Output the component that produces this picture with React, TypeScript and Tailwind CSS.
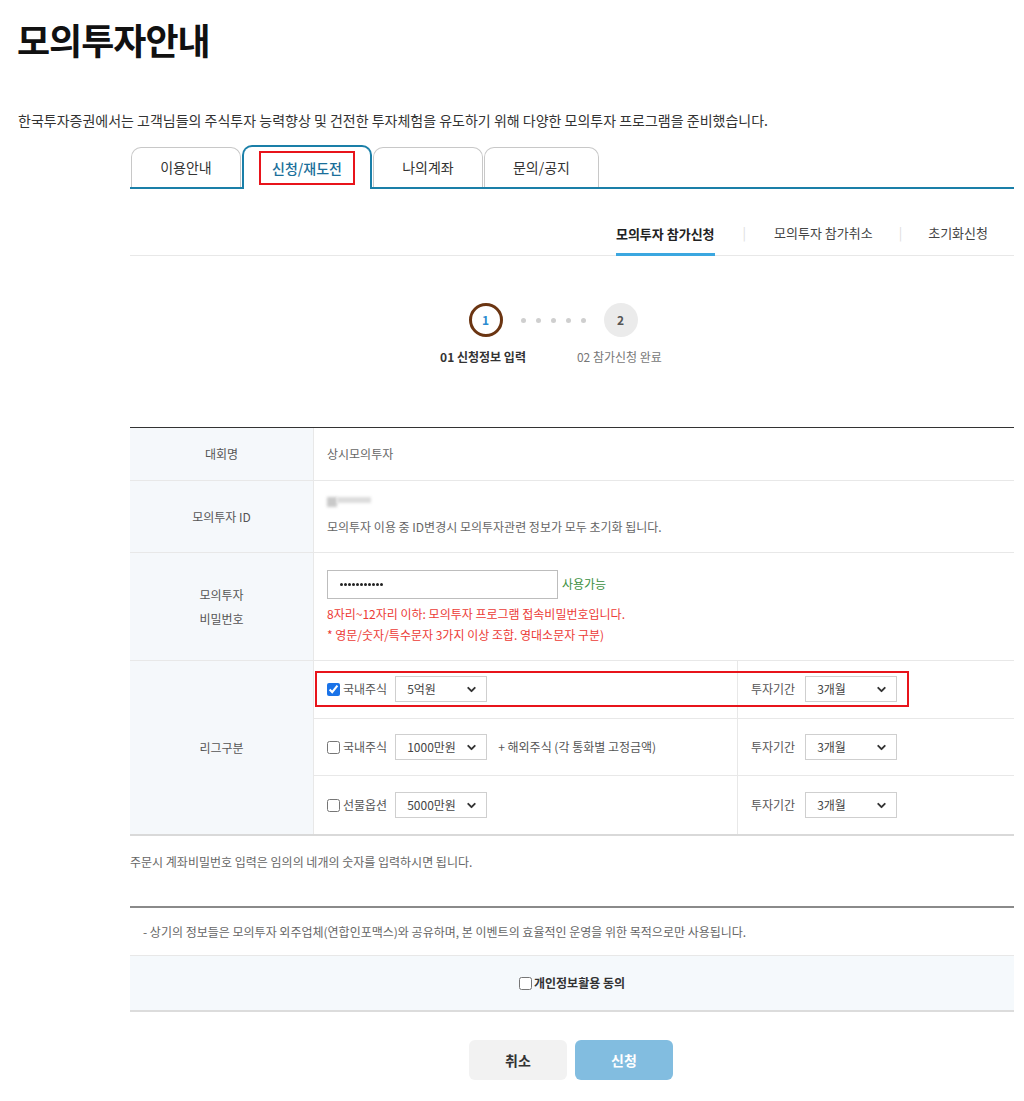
import { ReactNode } from "react";
import { ChevronDown } from "lucide-react";

function Select({ value, width }: { value: string; width: string }) {
  return (
    <div
      className={`${width} h-[26px] border border-[#cfcfcf] bg-white flex items-center justify-between pl-[11px] pr-[8px] text-[12px] text-[#444]`}
    >
      <span>{value}</span>
      <ChevronDown size={13} strokeWidth={3.5} className="text-[#333]" />
    </div>
  );
}

function Check({ checked, label }: { checked?: boolean; label: string }) {
  return (
    <label className="flex items-center gap-[3px] text-[12px] text-[#555]">
      <input
        type="checkbox"
        defaultChecked={checked}
        className="w-[13px] h-[13px] m-0 accent-[#1a73e8]"
      />
      <span>{label}</span>
    </label>
  );
}

function Row({ label, children, h }: { label: ReactNode; children: ReactNode; h: string }) {
  return (
    <div className={`flex ${h} border-b border-[#e8e8e8]`}>
      <div className="w-[184px] shrink-0 bg-[#f5f8fb] border-r border-[#e8e8e8] flex items-center justify-center text-center text-[12px] text-[#555] leading-[24px]">
        {label}
      </div>
      <div className="flex-1 flex flex-col justify-center pl-[13px]">{children}</div>
    </div>
  );
}

function LeagueRow({
  children,
  highlight,
  last,
}: {
  children: ReactNode;
  highlight?: boolean;
  last?: boolean;
}) {
  return (
    <div className={`relative flex h-[58px] ${last ? "" : "border-b border-[#e8e8e8]"}`}>
      <div className="w-[424px] shrink-0 flex items-center gap-[8px] pl-[13px] border-r border-[#e8e8e8]">
        {children}
      </div>
      <div className="flex-1 flex items-center gap-[10px] pl-[13px] text-[12px] text-[#555]">
        <span>투자기간</span>
        <Select value="3개월" width="w-[92px]" />
      </div>
      {highlight && (
        <div className="absolute left-[1px] top-[10px] w-[594px] h-[36px] border-2 border-[#e8141b] pointer-events-none" />
      )}
    </div>
  );
}

export default function App() {
  const dots = Array.from({ length: 11 });
  return (
    <div className="w-[1024px] min-h-[1101px] bg-white font-['Noto_Sans_CJK_KR','Noto_Sans',sans-serif] text-[#222]">
      {/* Title */}
      <h1 className="pl-[17px] pt-[17px] text-[36px] font-bold leading-[44px] tracking-[-1px] text-[#111]">
        모의투자안내
      </h1>
      <p className="pl-[18px] mt-[49px] text-[14px] leading-[20px] text-[#333]">
        한국투자증권에서는 고객님들의 주식투자 능력향상 및 건전한 투자체험을 유도하기 위해 다양한 모의투자 프로그램을 준비했습니다.
      </p>

      <div className="ml-[130px] w-[884px] mt-[15px]">
        {/* Tabs */}
        <div className="flex items-end h-[44px] border-b-2 border-[#1a7fa8] pl-[1px] gap-[1px]">
          <div className="w-[110px] h-[40px] border border-b-0 border-[#c8c8c8] rounded-t-[10px] flex items-center justify-center text-[14px] text-[#333]">
            이용안내
          </div>
          <div className="relative w-[130px] h-[44px] -mb-[2px] border-2 border-b-0 border-[#1a7fa8] rounded-t-[10px] bg-white flex items-center justify-center">
            <div className="w-[96px] h-[34px] border-2 border-[#e8141b] flex items-center justify-center text-[14px] text-[#1a6f9a] font-medium">
              신청/재도전
            </div>
          </div>
          <div className="w-[110px] h-[40px] border border-b-0 border-[#c8c8c8] rounded-t-[10px] flex items-center justify-center text-[14px] text-[#333]">
            나의계좌
          </div>
          <div className="w-[115px] h-[40px] border border-b-0 border-[#c8c8c8] rounded-t-[10px] flex items-center justify-center text-[14px] text-[#333]">
            문의/공지
          </div>
        </div>

        {/* Sub nav */}
        <div className="h-[67px] flex items-end justify-end pr-[26px] border-b border-[#e8e8e8] text-[13px]">
          <div className="h-[32px] border-b-[3px] border-[#3ba7e0] font-bold text-[#222] -mb-px">
            모의투자 참가신청
          </div>
          <span className="h-[32px] mx-[28px] text-[#ddd]">|</span>
          <div className="h-[32px] text-[#444]">모의투자 참가취소</div>
          <span className="h-[32px] mx-[26px] text-[#ddd]">|</span>
          <div className="h-[32px] text-[#444]">초기화신청</div>
        </div>

        {/* Stepper */}
        <div className="h-[171px] flex flex-col items-center pt-[47px] pr-[38px]">
          <div className="flex items-center">
            <div className="w-[34px] h-[34px] rounded-full border-[3px] border-[#6b3512] flex items-center justify-center text-[12px] font-bold text-[#2b8bd0]">
              1
            </div>
            <div className="flex items-center gap-[10px] mx-[18px]">
              <span className="w-[5px] h-[5px] rounded-full bg-[#cfcfcf]" />
              <span className="w-[5px] h-[5px] rounded-full bg-[#cfcfcf]" />
              <span className="w-[5px] h-[5px] rounded-full bg-[#cfcfcf]" />
              <span className="w-[5px] h-[5px] rounded-full bg-[#cfcfcf]" />
              <span className="w-[5px] h-[5px] rounded-full bg-[#cfcfcf]" />
            </div>
            <div className="w-[34px] h-[34px] rounded-full bg-[#ebebeb] flex items-center justify-center text-[12px] font-bold text-[#555]">
              2
            </div>
          </div>
          <div className="flex items-center mt-[11px] text-[12px] ml-[-4px]">
            <span className="font-bold text-[#333]">01 신청정보 입력</span>
            <span className="ml-[51px] text-[#777]">02 참가신청 완료</span>
          </div>
        </div>

        {/* Form table */}
        <div className="border-t border-[#333] border-b-2 border-b-[#d9d9d9]">
          <Row label="대회명" h="h-[53px]">
            <span className="text-[12px] text-[#666]">상시모의투자</span>
          </Row>
          <Row label="모의투자 ID" h="h-[72px]">
            <div className="flex items-center mb-[11px]">
              <div className="w-[10px] h-[10px] bg-[#c9c9c9] blur-[1.5px]" />
              <div className="w-[34px] h-[6px] -mt-[4px] bg-[#dcdcdc] blur-[1.5px]" />
            </div>
            <span className="text-[12px] text-[#666]">
              모의투자 이용 중 ID변경시 모의투자관련 정보가 모두 초기화 됩니다.
            </span>
          </Row>
          <Row
            label={
              <>
                모의투자
                <br />
                비밀번호
              </>
            }
            h="h-[108px]"
          >
            <div className="flex items-center gap-[4px]">
              <div className="w-[231px] h-[29px] border border-[#bdbdbd] flex items-center gap-[1px] pl-[12px]">
                {dots.map((_, i) => (
                  <span key={i} className="w-[3px] h-[3px] rounded-full bg-[#222]" />
                ))}
              </div>
              <span className="text-[12px] text-[#3a8f3e]">사용가능</span>
            </div>
            <p className="mt-[6px] text-[12px] text-[#ec3b36] leading-[18px]">
              8자리~12자리 이하: 모의투자 프로그램 접속비밀번호입니다.
            </p>
            <p className="mt-[3px] text-[12px] text-[#ec3b36] leading-[18px]">
              * 영문/숫자/특수문자 3가지 이상 조합. 영대소문자 구분)
            </p>
          </Row>
          <div className="flex h-[173px]">
            <div className="w-[184px] shrink-0 bg-[#f5f8fb] border-r border-[#e8e8e8] flex items-center justify-center text-[12px] text-[#555]">
              리그구분
            </div>
            <div className="flex-1 flex flex-col">
              <LeagueRow highlight>
                <Check checked label="국내주식" />
                <Select value="5억원" width="w-[92px]" />
              </LeagueRow>
              <LeagueRow>
                <Check label="국내주식" />
                <Select value="1000만원" width="w-[92px]" />
                <span className="ml-[3px] text-[12px] text-[#555]">+ 해외주식 (각 통화별 고정금액)</span>
              </LeagueRow>
              <LeagueRow last>
                <Check label="선물옵션" />
                <Select value="5000만원" width="w-[92px]" />
              </LeagueRow>
            </div>
          </div>
        </div>

        <p className="mt-[17px] text-[12px] text-[#666]">
          주문시 계좌비밀번호 입력은 임의의 네개의 숫자를 입력하시면 됩니다.
        </p>

        {/* Privacy */}
        <div className="mt-[35px] border-t-2 border-[#8a8a8a]">
          <p className="h-[48px] flex items-center pl-[13px] text-[12px] text-[#666] border-b border-[#e8e8e8]">
            - 상기의 정보들은 모의투자 외주업체(연합인포맥스)와 공유하며, 본 이벤트의 효율적인 운영을 위한 목적으로만 사용됩니다.
          </p>
          <div className="h-[56px] bg-[#f5f9fc] border-b-2 border-[#dcdcdc] flex items-center justify-center">
            <label className="flex items-center gap-[2px] text-[12px] font-bold text-[#333]">
              <input type="checkbox" className="w-[13px] h-[13px] m-0" />
              <span>개인정보활용 동의</span>
            </label>
          </div>
        </div>

        {/* Buttons */}
        <div className="flex justify-center gap-[8px] mt-[28px] pr-[2px]">
          <button className="w-[98px] h-[40px] rounded-[6px] bg-[#f2f2f2] text-[14px] font-bold text-[#333]">
            취소
          </button>
          <button className="w-[98px] h-[40px] rounded-[6px] bg-[#82bde0] text-[14px] font-bold text-white">
            신청
          </button>
        </div>
      </div>
    </div>
  );
}
